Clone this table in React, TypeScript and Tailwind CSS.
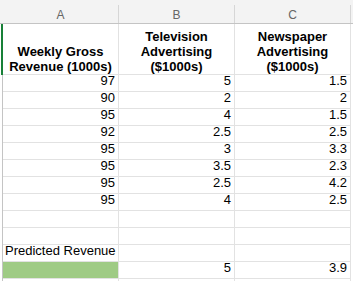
import React from "react";

const data: [string, string, string][] = [
  ["97", "5", "1.5"],
  ["90", "2", "2"],
  ["95", "4", "1.5"],
  ["92", "2.5", "2.5"],
  ["95", "3", "3.3"],
  ["95", "3.5", "2.3"],
  ["95", "2.5", "4.2"],
  ["95", "4", "2.5"],
];

function LeftEdge({ green = false }: { green?: boolean }) {
  return (
    <div className="flex w-[3px] shrink-0">
      <div className="w-px" />
      {green ? (
        <div className="w-[2px] bg-[#188038]" />
      ) : (
        <>
          <div className="w-px" />
          <div className="w-px bg-[#c4c4c4]" />
        </>
      )}
    </div>
  );
}

function NumCell({ v, className = "" }: { v?: string; className?: string }) {
  return (
    <div
      className={`flex h-[17px] w-[116px] shrink-0 items-end justify-end border-r border-b border-[#e2e2e2] pr-[3px] pb-[3px] text-[13px] leading-[14px] text-black ${className}`}
    >
      {v ?? ""}
    </div>
  );
}

function HeadCell({ label }: { label: string }) {
  return (
    <div className="flex h-full w-[116px] shrink-0">
      <div className="flex-1 pt-[8px] text-center text-[12px] leading-[14px] text-[#666666]">
        {label}
      </div>
      <div className="h-[18px] w-px self-end bg-[#d6d6d6]" />
    </div>
  );
}

function TitleCell({ lines }: { lines: string[] }) {
  return (
    <div className="flex h-[51px] w-[116px] shrink-0 flex-col items-center justify-end border-r border-b border-[#e2e2e2] text-center text-[13px] font-bold leading-[15px] text-black">
      {lines.map((l) => (
        <div key={l} className="whitespace-nowrap">
          {l}
        </div>
      ))}
    </div>
  );
}

export default function App() {
  return (
    <div className="h-[281px] w-[353px] overflow-hidden bg-white font-['Liberation_Sans',Arial,sans-serif]">
      <div className="flex h-[24px] border-b border-[#c4c4c4] bg-[#f3f3f3]">
        <div className="w-[3px] shrink-0" />
        <HeadCell label="A" />
        <HeadCell label="B" />
        <HeadCell label="C" />
      </div>
      <div className="flex">
        <LeftEdge green />
        <TitleCell lines={["Weekly Gross", "Revenue (1000s)"]} />
        <TitleCell lines={["Television", "Advertising", "($1000s)"]} />
        <TitleCell lines={["Newspaper", "Advertising", "($1000s)"]} />
      </div>
      {data.map((r, i) => (
        <div key={i} className="flex">
          <LeftEdge />
          <NumCell v={r[0]} />
          <NumCell v={r[1]} />
          <NumCell v={r[2]} />
        </div>
      ))}
      {[0, 1].map((i) => (
        <div key={`e${i}`} className="flex">
          <LeftEdge />
          <NumCell />
          <NumCell />
          <NumCell />
        </div>
      ))}
      <div className="flex">
        <LeftEdge />
        <div className="flex h-[17px] w-[116px] shrink-0 items-end border-r border-b border-[#e2e2e2] pb-[3px] pl-[2px] text-[13px] leading-[14px] whitespace-nowrap text-black">
          Predicted Revenue
        </div>
        <NumCell />
        <NumCell />
      </div>
      <div className="flex">
        <LeftEdge />
        <NumCell className="bg-[#9fcb85]" />
        <NumCell v="5" />
        <NumCell v="3.9" />
      </div>
      <div className="flex">
        <LeftEdge />
        <NumCell />
        <NumCell />
        <NumCell />
      </div>
    </div>
  );
}
